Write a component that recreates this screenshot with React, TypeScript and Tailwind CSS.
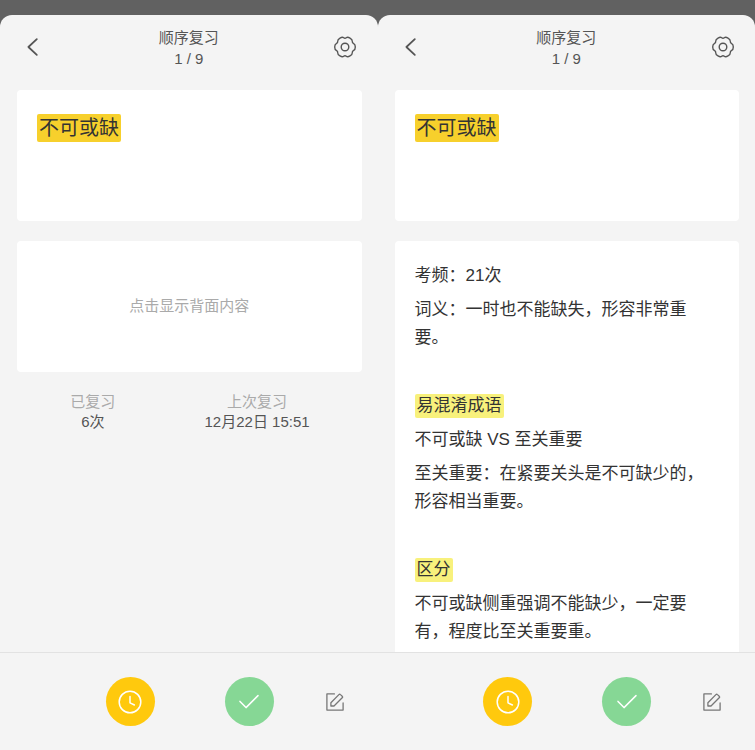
import React, { useState } from 'react';

const stroke = {
  fill: 'none',
  stroke: 'currentColor',
  strokeLinecap: 'round' as const,
  strokeLinejoin: 'round' as const,
};

const BackIcon = () => (
  <svg width="24" height="24" viewBox="0 0 24 24" strokeWidth="1.8" {...stroke} aria-hidden="true">
    <path d="M16.8 4.2 8.4 12l8.4 7.8" />
  </svg>
);

const GearIcon = () => (
  <svg width="24" height="24" viewBox="0 0 24 24" strokeWidth="1.4" {...stroke} aria-hidden="true">
    <path d="M22.3 12Q22.3 14.6 20.7 15.35Q19.1 16.1 19.25 17.85Q19.4 19.6 17 20.95Q14.6 22.3 13.3 21.25Q12 20.2 10.7 21.25Q9.4 22.3 7 20.95Q4.6 19.6 4.75 17.85Q4.9 16.1 3.3 15.35Q1.7 14.6 1.7 12Q1.7 9.4 3.3 8.65Q4.9 7.9 4.75 6.15Q4.6 4.4 7 3.05Q9.4 1.7 10.7 2.75Q12 3.8 13.3 2.75Q14.6 1.7 17 3.05Q19.4 4.4 19.25 6.15Q19.1 7.9 20.7 8.65Q22.3 9.4 22.3 12Z" />
    <circle cx="12" cy="12" r="3.8" />
  </svg>
);

const ClockIcon = () => (
  <svg width="24" height="24" viewBox="0 0 24 24" strokeWidth="1.5" {...stroke} aria-hidden="true">
    <circle cx="12" cy="12" r="10.8" />
    <path d="M12 6.4v6.4l4.4 2.2" />
  </svg>
);

const CheckIcon = () => (
  <svg width="24" height="24" viewBox="0 0 24 24" strokeWidth="1.5" {...stroke} aria-hidden="true">
    <path d="M3 11.4 9 17.6 21 5.6" />
  </svg>
);

const EditIcon = () => (
  <svg width="18" height="18" viewBox="0 0 18 18" strokeWidth="1.3" {...stroke} aria-hidden="true">
    <path d="M8.4.9H.9v16.2h16.2V10" />
    <path d="M12.9 1.6q.8-.8 1.6 0l1.7 1.6q.8.8 0 1.6L8 13H4.9V9.8Z" />
  </svg>
);

const Mark = ({ children }: { children: React.ReactNode }) => (
  <mark className="inline-block rounded-xs bg-[#f8f17c] px-0.5 leading-6 text-[#333]">{children}</mark>
);

const CardBack = () => (
  <section className="flex flex-1 flex-col gap-1.5 rounded-t bg-white pt-[21px] pr-8 pl-5 text-[17px] leading-7 text-[#333]">
    <p>考频：21次</p>
    <p>词义：一时也不能缺失，形容非常重要。</p>
    <p><br /></p>
    <p><Mark>易混淆成语</Mark></p>
    <p>不可或缺 VS 至关重要</p>
    <p>至关重要：在紧要关头是不可缺少的，形容相当重要。</p>
    <p><br /></p>
    <p><Mark>区分</Mark></p>
    <p>不可或缺侧重强调不能缺少，一定要有，程度比至关重要重。</p>
  </section>
);

const ReviewScreen = ({ initialOpen = false }: { initialOpen?: boolean }) => {
  const [open, setOpen] = useState(initialOpen);

  return (
    <div className="flex min-w-0 flex-1 flex-col rounded-t-xl bg-[#f4f4f4]">
      <header className="flex items-start justify-between px-5 pt-3 pb-[21px] text-[#555]">
        <button type="button" aria-label="返回" className="mt-2">
          <BackIcon />
        </button>
        <div className="text-center text-[15px] leading-[21px]">
          <h1>顺序复习</h1>
          <p>1 / 9</p>
        </div>
        <button type="button" aria-label="设置" className="mt-2">
          <GearIcon />
        </button>
      </header>

      <main className="flex flex-1 flex-col gap-5 pr-4 pl-[17px]">
        <section className="h-[131px] rounded bg-white px-5 pt-6 text-xl leading-7 text-[#333]">
          <mark className="inline-block rounded-xs bg-[#f7d02c] px-0.5 text-[#333]">不可或缺</mark>
        </section>

        {open ? (
          <CardBack />
        ) : (
          <>
            <button
              type="button"
              onClick={() => setOpen(true)}
              className="h-[131px] rounded bg-white text-[15px] text-[#aaa]"
            >
              点击显示背面内容
            </button>
            <dl className="grid grid-cols-[6fr_7fr] pr-4 text-center text-[15px] leading-5">
              <div>
                <dt className="text-[#aaa]">已复习</dt>
                <dd className="text-[#555]">6次</dd>
              </div>
              <div>
                <dt className="text-[#aaa]">上次复习</dt>
                <dd className="text-[#555]">12月22日 15:51</dd>
              </div>
            </dl>
          </>
        )}
      </main>

      <footer className="flex h-[98px] items-center justify-end border-t border-[#e2e2e2] pr-[34px]">
        <button
          type="button"
          aria-label="稍后复习"
          className="mr-[70px] flex size-[49px] items-center justify-center rounded-full bg-[#ffc90d] text-white"
        >
          <ClockIcon />
        </button>
        <button
          type="button"
          aria-label="已掌握"
          className="mr-[52px] flex size-[49px] items-center justify-center rounded-full bg-[#86d795] text-white"
        >
          <CheckIcon />
        </button>
        <button type="button" aria-label="编辑" className="text-[#777]">
          <EditIcon />
        </button>
      </footer>
    </div>
  );
};

const App: React.FC = () => {
  return (
    <div
      lang="zh-CN"
      className="flex min-h-screen bg-[#616161] pt-[15px] font-['Liberation_Sans','Noto_Sans_CJK_SC',sans-serif]"
    >
      <ReviewScreen />
      <ReviewScreen initialOpen />
    </div>
  );
};

export default App;
